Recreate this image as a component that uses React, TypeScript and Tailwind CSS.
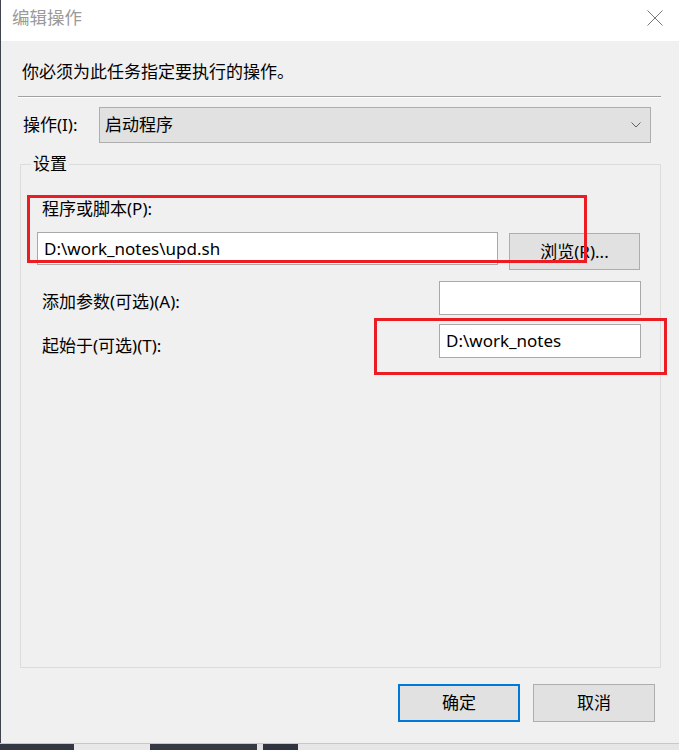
import React from 'react';

const cjk = "font-['Noto_Sans','Noto_Sans_CJK_SC',sans-serif]";

function TextBox({ value, className }: { value?: string; className: string }) {
  return (
    <div
      className={`flex items-center border border-[#a9a9a9] bg-white pl-[6px] text-[17px] text-black ${className}`}
    >
      {value}
    </div>
  );
}

export default function App() {
  return (
    <div className={`relative flex h-[750px] w-[679px] flex-col overflow-hidden bg-[#e6e6e6] ${cjk}`}>
      <div className="flex flex-1 flex-col border-l border-[#40444c]">
        {/* title bar */}
        <div className="flex h-[41px] items-start justify-between bg-white pl-[11px] pr-[16px] pt-[5px]">
          <span className="text-[17.5px] leading-[24px] text-[#9a9a9a]">编辑操作</span>
          <svg width="16" height="16" viewBox="0 0 16 16" className="mt-[5px]">
            <path d="M0.5 0.5 L15.5 15.5 M15.5 0.5 L0.5 15.5" stroke="#777" strokeWidth="1" fill="none" />
          </svg>
        </div>

        <div className="flex flex-1 flex-col bg-[#f0f0f0]">
          <p className="ml-[21px] mt-[19px] text-[17px] leading-[24px] text-black">
            你必须为此任务指定要执行的操作。
          </p>
          <div className="ml-[17px] mr-[18px] mt-[12px] h-[2px] border-t border-[#a0a0a0] border-b border-b-white" />

          {/* action row */}
          <div className="mt-[9px] flex items-center pl-[22px] pr-[28px]">
            <span className="w-[76px] text-[17px] leading-[24px] text-black">操作(I):</span>
            <div className="flex h-[36px] flex-1 items-center justify-between border border-[#adadad] bg-[#e1e1e1] pl-[5px] pr-[9px]">
              <span className="text-[17px] text-black">启动程序</span>
              <svg width="10" height="6" viewBox="0 0 10 6">
                <path d="M0.5 0.5 L5 5 L9.5 0.5" stroke="#606060" strokeWidth="1" fill="none" />
              </svg>
            </div>
          </div>

          {/* settings group */}
          <fieldset className="ml-[19px] mr-[18px] mt-[9px] h-[516px] border border-[#dcdcdc] px-0">
            <legend className="ml-[10px] px-[2px] text-[17px] leading-[24px] text-black">设置</legend>

            <p className="ml-[21px] mt-[21px] text-[17px] leading-[24px] text-black">程序或脚本(P):</p>
            <div className="mt-[11px] flex items-start pl-[16px]">
              <TextBox value="D:\work_notes\upd.sh" className="h-[33px] w-[461px]" />
              <button className="ml-[11px] mt-[1px] flex h-[37px] w-[131px] items-center justify-center border border-[#adadad] bg-[#e1e1e1] text-[17px] text-black">
                浏览(R)...
              </button>
            </div>

            <div className="mt-[11px] flex items-center justify-between pl-[21px] pr-[19px]">
              <span className="mt-[8px] text-[17px] leading-[24px] text-black">添加参数(可选)(A):</span>
              <TextBox className="h-[34px] w-[202px]" />
            </div>
            <div className="mt-[9px] flex items-center justify-between pl-[21px] pr-[19px]">
              <span className="mt-[10px] text-[17px] leading-[24px] text-black">起始于(可选)(T):</span>
              <TextBox value="D:\work_notes" className="h-[34px] w-[202px]" />
            </div>
          </fieldset>

          {/* dialog buttons */}
          <div className="mt-[16px] flex justify-end gap-[13px] pr-[24px]">
            <button className="flex h-[38px] w-[122px] items-center justify-center border-2 border-[#0078d7] bg-[#e1e1e1] text-[17px] text-black">
              确定
            </button>
            <button className="flex h-[38px] w-[122px] items-center justify-center border border-[#adadad] bg-[#e1e1e1] text-[17px] text-black">
              取消
            </button>
          </div>
        </div>
      </div>

      {/* desktop peeking below the window */}
      <div className="flex h-[7px] shrink-0 border-t border-[#c8c8c8]">
        <div className="w-[74px] bg-[#343844]" />
        <div className="w-[76px] bg-[#e8e8e8]" />
        <div className="w-[107px] bg-[#353945]" />
        <div className="w-[6px] bg-[#e0e0e0]" />
        <div className="w-[35px] bg-[#30343f]" />
        <div className="flex-1 bg-[#e6e6e6]" />
      </div>

      {/* red annotation boxes drawn over the dialog */}
      <div className="pointer-events-none absolute left-[27px] top-[195px] h-[68px] w-[560px] border-[3px] border-[#ec1c24]" />
      <div className="pointer-events-none absolute left-[374px] top-[318px] h-[57px] w-[293px] border-[3px] border-[#ec1c24]" />
    </div>
  );
}
